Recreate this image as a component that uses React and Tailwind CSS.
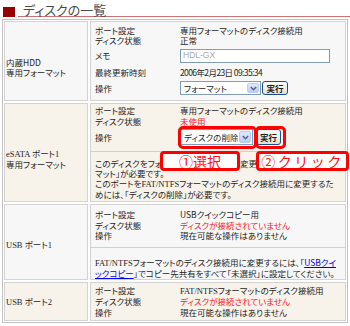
import React from "react";

function Line({ h, label, children }) {
  return (
    <div className={"flex items-center whitespace-nowrap " + h}>
      <div className="w-[85px] shrink-0">{label}</div>
      <div className="flex items-center">{children}</div>
    </div>
  );
}

function Select({ cls, label }) {
  return (
    <div className={"flex border border-[#7f9db9] bg-white " + cls}>
      <div className="flex-1 flex items-center pl-[3px] leading-none whitespace-nowrap overflow-hidden">{label}</div>
      <div className="w-[12px] m-[1px] flex items-center justify-center rounded-[2px] bg-linear-to-b from-[#e1eafc] to-[#b9cdf6] border border-[#bccdf1]">
        <svg width="7" height="5" viewBox="0 0 7 5">
          <path d="M0.8 1 L3.5 3.8 L6.2 1" fill="none" stroke="#4d6185" strokeWidth="1.4" />
        </svg>
      </div>
    </div>
  );
}

function Btn({ cls }) {
  return (
    <div className={"flex items-center justify-center border border-[#1c4e8a] rounded-[3px] bg-linear-to-b from-white to-[#e4e1d3] font-bold leading-none " + cls}>
      実行
    </div>
  );
}

const serif = "font-['Liberation_Serif','Noto_Sans_CJK_JP',serif]";
const red = "text-[#ff2020]";

export default function App() {
  return (
    <div className="relative w-[350px] h-[326px] overflow-hidden bg-white text-[#1e1e1e] text-[8.5px] leading-[11px] font-['Noto_Sans_CJK_JP',sans-serif] [font-feature-settings:'palt']">
      {/* header */}
      <div className="flex h-[19px]">
        <div className="ml-[3px] mt-[7px] w-[12px] h-[10px] bg-[#990000]" />
        <div className="ml-[3px] flex-1 h-[17px] border-b border-[#cc7070] pl-[5px] pt-[3px] text-[13px] leading-[13px] text-[#4a4a4a]">
          ディスクの一覧
        </div>
      </div>

      {/* table */}
      <div className="mx-[2px] border border-[#c2c2c2] p-[1px] flex flex-col gap-[2px]">
        {/* row 1 */}
        <div className="grid grid-cols-[84px_1fr] gap-[2px]">
          <div className="border border-[#d3d3d3] bg-[#f7f7f7] flex items-center pl-[1px] pt-[12px] leading-[10px]">
            <div>
              内蔵HDD
              <br />
              専用フォーマット
            </div>
          </div>
          <div className="border border-[#d3d3d3] bg-[#f7f7f7] pl-[4px] pt-[3px] pb-[3px] flex flex-col">
            <Line h="h-[10px]" label="ポート設定">専用フォーマットのディスク接続用</Line>
            <Line h="h-[11px]" label="ディスク状態">正常</Line>
            <Line h="h-[19px]" label="メモ">
              <div className="w-[150px] h-[14px] border border-[#7f9db9] bg-white flex items-center pl-[2px] text-[#a8a8a8] font-['Liberation_Sans',sans-serif] text-[8.5px] leading-none">
                HDL-GX
              </div>
            </Line>
            <Line h="h-[14px]" label="最終更新時刻">
              <span className="tracking-[-0.6px]">2006年2月23日 09:35:34</span>
            </Line>
            <Line h="h-[18px]" label="操作">
              <Select cls="w-[81px] h-[14px]" label="フォーマット" />
              <Btn cls="ml-[1px] w-[26px] h-[14px]" />
            </Line>
          </div>
        </div>

        {/* row 2 */}
        <div className="grid grid-cols-[84px_1fr] gap-[2px]">
          <div className="border border-[#d3d3d3] bg-[#f7f2ea] flex items-center pl-[1px] pt-[11px] leading-[10px]">
            <div>
              <span className={serif}>eSATA ポート1</span>
              <br />
              専用フォーマット
            </div>
          </div>
          <div className="border border-[#d3d3d3] bg-[#f7f2ea] flex flex-col">
            <div className="pl-[4px] pt-[1px] pb-[4px] flex flex-col">
              <Line h="h-[11px]" label="ポート設定">専用フォーマットのディスク接続用</Line>
              <Line h="h-[11px]" label="ディスク状態">
                <span className={red}>未使用</span>
              </Line>
              <Line h="h-[20px]" label="操作">
                <Select cls="w-[73px] h-[16px]" label="ディスクの削除" />
                <Btn cls="ml-[3px] w-[25px] h-[16px]" />
              </Line>
            </div>
            <div className="border-t border-[#cfcfcf] pl-[4px] pt-[7px] pb-[2px] leading-[9.5px] whitespace-nowrap overflow-hidden">
              <div>
                このディスクをフォーマットし専用形式に変更するには「フォー
                <br />
                マット」が必要です。
              </div>
              <div className="mt-[1px]">
                このポートを<span className={serif}>FAT/NTFS</span>フォーマットのディスク接続用に変更するた
                <br />
                めには、「ディスクの削除」が必要です。
              </div>
            </div>
          </div>
        </div>

        {/* row 3 */}
        <div className="grid grid-cols-[84px_1fr] gap-[2px]">
          <div className="border border-[#d3d3d3] bg-[#f7f7f7] flex items-center pl-[1px] pt-[6px]">
            <span className={serif}>USB ポート1</span>
          </div>
          <div className="border border-[#d3d3d3] bg-[#f7f7f7] flex flex-col">
            <div className="pl-[4px] pt-[4px] pb-[6px] flex flex-col">
              <Line h="h-[11px]" label="ポート設定">USBクイックコピー用</Line>
              <Line h="h-[10px]" label="ディスク状態">
                <span className={red}>ディスクが接続されていません</span>
              </Line>
              <Line h="h-[11px]" label="操作">現在可能な操作はありません</Line>
            </div>
            <div className="border-t border-[#cfcfcf] pl-[4px] pt-[9px] pb-[1px] leading-[10px] whitespace-nowrap overflow-hidden">
              <span className={serif}>FAT/NTFS</span>フォーマットのディスク接続用に変更するには、「
              <a className="text-[#0000ee] underline">
                USBクイ
                <br />
                ックコピー
              </a>
              」でコピー先共有をすべて「未選択」に設定してください。
            </div>
          </div>
        </div>

        {/* row 4 */}
        <div className="grid grid-cols-[84px_1fr] gap-[2px]">
          <div className="border border-[#d3d3d3] bg-[#f7f2ea] flex items-center pl-[1px] pt-[2px]">
            <span className={serif}>USB ポート2</span>
          </div>
          <div className="border border-[#d3d3d3] bg-[#f7f2ea] pl-[4px] pt-[2px] pb-[2px] flex flex-col">
            <Line h="h-[11px]" label="ポート設定">
              <span>
                <span className={serif}>FAT/NTFS</span>フォーマットのディスク接続用
              </span>
            </Line>
            <Line h="h-[11px]" label="ディスク状態">
              <span className={red}>ディスクが接続されていません</span>
            </Line>
            <Line h="h-[11px]" label="操作">現在可能な操作はありません</Line>
          </div>
        </div>
      </div>

      {/* callouts */}
      <div className="absolute left-[178px] top-[126px] w-[79px] h-[23px] border-[3px] border-[#ff0000] rounded-[5px]" />
      <div className="absolute left-[255px] top-[126px] w-[31px] h-[23px] border-[3px] border-[#ff0000] rounded-[5px]" />
      <div className="absolute left-[160px] top-[151px] w-[80px] h-[20px] bg-white border-[3px] border-[#ff0000] rounded-[4px] flex items-center justify-center text-[14px] leading-none text-[#ff1010] [font-feature-settings:normal]">
        ①選択
      </div>
      <div className="absolute left-[256px] top-[151px] w-[93px] h-[20px] bg-white border-[3px] border-[#ff0000] rounded-[4px] flex items-center justify-center text-[14px] leading-none tracking-[2.5px] text-[#ff1010] [font-feature-settings:normal]">
        ②クリック
      </div>
    </div>
  );
}
